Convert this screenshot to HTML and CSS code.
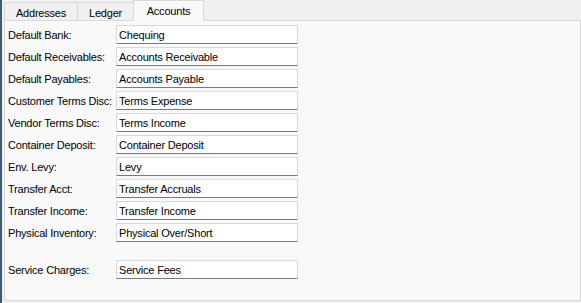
FILE: index.html
```html
<!DOCTYPE html>
<html>
<head>
<meta charset="utf-8">
<link rel="stylesheet" href="styles.css">
</head>
<body>
<div class="window">
  <div class="strip"></div>
  <div class="main">
    <div class="tabs">
      <div class="tab tab-addresses">Addresses</div>
      <div class="tab tab-ledger">Ledger</div>
      <div class="tab tab-accounts active">Accounts</div>
    </div>
    <div class="panel">
      <div class="form">
        <div class="row"><span class="label">Default Bank:</span><span class="field">Chequing</span></div>
        <div class="row"><span class="label">Default Receivables:</span><span class="field">Accounts Receivable</span></div>
        <div class="row"><span class="label">Default Payables:</span><span class="field">Accounts Payable</span></div>
        <div class="row"><span class="label">Customer Terms Disc:</span><span class="field">Terms Expense</span></div>
        <div class="row"><span class="label">Vendor Terms Disc:</span><span class="field">Terms Income</span></div>
        <div class="row"><span class="label">Container Deposit:</span><span class="field">Container Deposit</span></div>
        <div class="row"><span class="label">Env. Levy:</span><span class="field">Levy</span></div>
        <div class="row"><span class="label">Transfer Acct:</span><span class="field">Transfer Accruals</span></div>
        <div class="row"><span class="label">Transfer Income:</span><span class="field">Transfer Income</span></div>
        <div class="row"><span class="label">Physical Inventory:</span><span class="field">Physical Over/Short</span></div>
        <div class="row row-sep"><span class="label">Service Charges:</span><span class="field">Service Fees</span></div>
      </div>
    </div>
  </div>
</div>
</body>
</html>
```
FILE: styles.css
```css
html, body {
  margin: 0;
  padding: 0;
}
body {
  background: #f0f0f0;
  font-family: "Liberation Sans", Arial, sans-serif;
  font-size: 11px;
  letter-spacing: -0.2px;
  color: #000;
  width: 581px;
  height: 303px;
  overflow: hidden;
}
.window {
  display: flex;
  height: 303px;
}
.strip {
  width: 2px;
  background: #3f5b6f;
  flex: none;
}
.main {
  margin-left: 2px;
  width: 577px;
  display: flex;
  flex-direction: column;
}
.tabs {
  display: flex;
  align-items: flex-end;
  height: 21px;
  margin-bottom: -1px;
}
.tab {
  box-sizing: border-box;
  height: 19px;
  border: 1px solid #d9d9d9;
  border-bottom: none;
  background: #f0f0f0;
  display: flex;
  align-items: center;
  justify-content: center;
  padding-top: 1px;
}
.tab-addresses {
  width: 74px;
}
.tab-ledger {
  width: 56px;
  border-left: none;
}
.tab-accounts {
  width: 71px;
  margin-left: -1px;
}
.tab.active {
  height: 21px;
  background: #f9f9f9;
  position: relative;
  z-index: 1;
  padding-top: 0;
}
.panel {
  box-sizing: border-box;
  height: 281px;
  border: 1px solid #d9d9d9;
  background: #f9f9f9;
  padding: 4px 0 0 3px;
}
.form {
  display: flex;
  flex-direction: column;
  gap: 3px;
}
.row {
  display: flex;
  align-items: center;
  height: 19px;
}
.row-sep {
  margin-top: 15px;
}
.label {
  width: 108px;
  flex: none;
}
.field {
  box-sizing: border-box;
  width: 182px;
  height: 19px;
  background: #fff;
  border: 1px solid #d9d9d9;
  border-bottom-color: #7a7a7a;
  padding-left: 2px;
  display: flex;
  align-items: center;
}
```
